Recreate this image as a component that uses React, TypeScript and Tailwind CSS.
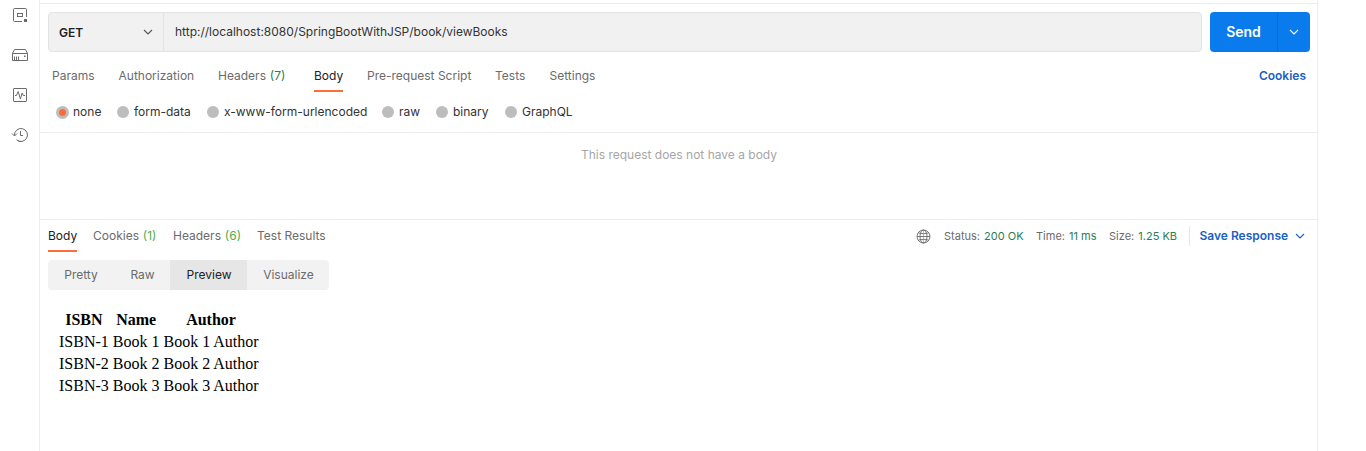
import React from "react";

function Chevron({ className }: { className?: string }) {
  return (
    <svg className={className} width="10" height="6" viewBox="0 0 10 6" fill="none" stroke="currentColor" strokeWidth="1.1">
      <path d="M1 1l4 4 4-4" />
    </svg>
  );
}

function Sidebar() {
  return (
    <aside className="flex w-10 shrink-0 flex-col items-center gap-6 border-r border-[#ededed] pt-[7px] text-[#6b6b6b]">
      <svg width="16" height="16" viewBox="0 0 16 16" fill="none" stroke="currentColor">
        <path d="M10 14.500H2.500a1 1 0 0 1-1-1v-11a1 1 0 0 1 1-1h11a1 1 0 0 1 1 1V10" />
        <rect x="5.500" y="6.500" width="5" height="3" />
        <path d="M12 12h3v3h-3z" fill="currentColor" stroke="none" />
      </svg>
      <svg width="16" height="16" viewBox="0 0 16 16" fill="none" stroke="currentColor">
        <path d="M.5 6.500v7h15v-7zM.5 6.500L2 3.200Q2.300 2.500 3 2.500h10q.7 0 1 .7l1.500 3.300" />
        <path d="M2.500 9.500v3.500M4.500 9.500v3.500M6.500 9.500v3.500" />
        <path d="M12 8.500h1.500v1.500H12z" fill="currentColor" stroke="none" />
      </svg>
      <svg width="16" height="16" viewBox="0 0 16 16" fill="none" stroke="currentColor">
        <rect x="1.500" y="1.500" width="13" height="13" rx=".5" />
        <path d="M3 8.500h1.500l1.700-4L8.400 12l1.700-6 1.200 2.500H13" strokeLinejoin="round" />
      </svg>
      <svg width="18" height="16" viewBox="0 0 18 16" fill="none" stroke="currentColor">
        <path d="M3.500 8.500a6.500 6.500 0 1 1 2 4.200M7 13.900a6.500 6.500 0 0 0 3 .6" />
        <path d="M1 6.500l2.500 2.500L6 6.500M9.500 4v4.500h2.500" />
      </svg>
    </aside>
  );
}

function RequestBar() {
  return (
    <div className="flex h-10 gap-2">
      <div className="flex w-[1154px] rounded border border-[#e3e3e3] bg-[#f1f1f1]">
        <div className="flex w-[115px] items-center justify-between border-r border-[#e3e3e3] px-[10px]">
          <span className="pt-px font-semibold text-[#212121]">GET</span>
          <Chevron className="text-[#555]" />
        </div>
        <span className="pl-[11px] leading-[38px] text-[#333]">
          http://localhost:8080/SpringBootWithJSP/book/viewBooks
        </span>
      </div>
      <button className="flex w-[100px] items-center rounded bg-[#097bed] text-white">
        <span className="w-[67px] pb-px text-center text-[14px] font-semibold">Send</span>
        <span className="flex h-full flex-1 items-center justify-center border-l border-[#0a6dd3]">
          <Chevron />
        </span>
      </button>
    </div>
  );
}

const requestTabs = [
  { label: "Params", cell: "w-[66.5px]" },
  { label: "Authorization", cell: "w-[99.500px]" },
  { label: "Headers", count: "(7)", cell: "w-[96px]" },
  { label: "Body", cell: "w-[53px]", active: true },
  { label: "Pre-request Script", cell: "w-[128px]" },
  { label: "Tests", cell: "w-[54.5px]" },
  { label: "Settings", cell: "w-[60px]" },
];

const responseTabs = [
  { label: "Body", cell: "w-[45px]", active: true },
  { label: "Cookies", count: "(1)", cell: "w-[80px]" },
  { label: "Headers", count: "(6)", cell: "w-[84px]" },
  { label: "Test Results", cell: "w-[80px]" },
];

type Tab = { label: string; cell: string; count?: string; active?: boolean };

function Tabs({ tabs, countColor }: { tabs: Tab[]; countColor: string }) {
  return (
    <div className="flex h-8">
      {tabs.map((t) => (
        <div key={t.label} className={`shrink-0 whitespace-nowrap ${t.cell}`}>
          <span
            className={`inline-block h-8 border-b-2 leading-8 ${
              t.active ? "border-[#ff6c37] text-[#212121]" : "border-transparent text-[#6b6b6b]"
            }`}
          >
            {t.label}
            {t.count && <span className={`ml-[0.5px] ${countColor}`}> {t.count}</span>}
          </span>
        </div>
      ))}
    </div>
  );
}

const bodyTypes = [
  { label: "none", cell: "w-[61px]" },
  { label: "form-data", cell: "w-[90px]" },
  { label: "x-www-form-urlencoded", cell: "w-[175px]" },
  { label: "raw", cell: "w-[54px]" },
  { label: "binary", cell: "w-[69px]" },
  { label: "GraphQL", cell: "w-[80px]" },
];

function BodyTypes() {
  return (
    <div className="flex h-10 items-center pl-2 text-[#333]">
      {bodyTypes.map((b, i) => (
        <div key={b.label} className={`flex items-center ${b.cell}`}>
          {i === 0 ? (
            <span className="mr-1 flex size-[13px] items-center justify-center rounded-full bg-[#bdbdbd]">
              <span className="size-[7px] rounded-full bg-[#ff6c37]" />
            </span>
          ) : (
            <span className="mr-[5px] size-3 rounded-full bg-[#bdbdbd]" />
          )}
          <span className="whitespace-nowrap">{b.label}</span>
        </div>
      ))}
    </div>
  );
}

function ResponseMeta() {
  return (
    <div className="flex h-8 items-center text-[11px] text-[#6b6b6b]">
      <svg className="mr-[13px]" width="15" height="15" viewBox="0 0 15 15" fill="none" stroke="currentColor" strokeWidth=".9">
        <circle cx="7.500" cy="7.500" r="6.500" />
        <ellipse cx="7.500" cy="7.500" rx="3.500" ry="6.500" />
        <path d="M1 7.500h13M2.500 4q5 1.500 10 0M2.500 11q5-1.500 10 0" />
        <path d="M7.500 1v13" strokeOpacity=".5" />
      </svg>
      <span className="w-[92px]">Status: <span className="ml-px text-[#2b7d54]">200 OK</span></span>
      <span className="w-[73px]">Time: <span className="ml-px text-[#2b7d54]">11 ms</span></span>
      <span className="w-[80px]">Size: <span className="ml-px text-[#2b7d54]">1.25 KB</span></span>
      <span className="h-5 border-l border-[#e6e6e6]" />
      <span className="w-[105px] pl-[9.5px] text-[12px] font-semibold text-[#1a5fc4]">Save Response</span>
      <Chevron className="text-[#1a5fc4]" />
    </div>
  );
}

const books = [1, 2, 3];

export default function App() {
  return (
    <div className="flex h-[451px] w-[1366px] overflow-hidden bg-white font-['Inter',sans-serif] text-[12px]">
      <Sidebar />
      <main className="flex w-[1278px] flex-col border-r border-[#ededed] pt-[3px]">
        <section className="h-[130px] shrink-0 border-y border-[#ededed] pt-2 pl-2">
          <RequestBar />
          <div className="mt-2 flex justify-between pr-[11px] pl-1">
            <Tabs tabs={requestTabs} countColor="text-[#2b7d54]" />
            <span className="leading-8 font-semibold text-[#1a5fc4]">Cookies</span>
          </div>
          <BodyTypes />
        </section>
        <section className="h-[86px] shrink-0 pt-[13px] pl-px text-center leading-[18px] text-[#a6a6a6]">
          This request does not have a body
        </section>
        <section className="flex-1 border-t border-[#ededed] pl-2">
          <div className="flex justify-between pr-3">
            <Tabs tabs={responseTabs} countColor="text-[#4eac4d]" />
            <ResponseMeta />
          </div>
          <div className="mt-2 flex h-[30px] w-[281px] overflow-hidden rounded bg-[#f2f2f2] text-center leading-[30px] text-[#6b6b6b]">
            <span className="w-[66px]">Pretty</span>
            <span className="w-[56px] pl-px">Raw</span>
            <span className="w-[77px] bg-[#e6e6e6] pl-px text-[#212121]">Preview</span>
            <span className="w-[82px] pl-px">Visualize</span>
          </div>
          <table className="mt-[18px] ml-2 border-separate border-spacing-[2px] font-['Liberation_Serif',serif] text-[16px] leading-[18px] text-black">
            <thead>
              <tr>
                <th className="p-px">ISBN</th>
                <th className="p-px">Name</th>
                <th className="p-px">Author</th>
              </tr>
            </thead>
            <tbody>
              {books.map((n) => (
                <tr key={n}>
                  <td className="p-px">ISBN-{n}</td>
                  <td className="p-px">Book {n}</td>
                  <td className="p-px">Book {n} Author</td>
                </tr>
              ))}
            </tbody>
          </table>
        </section>
      </main>
    </div>
  );
}
